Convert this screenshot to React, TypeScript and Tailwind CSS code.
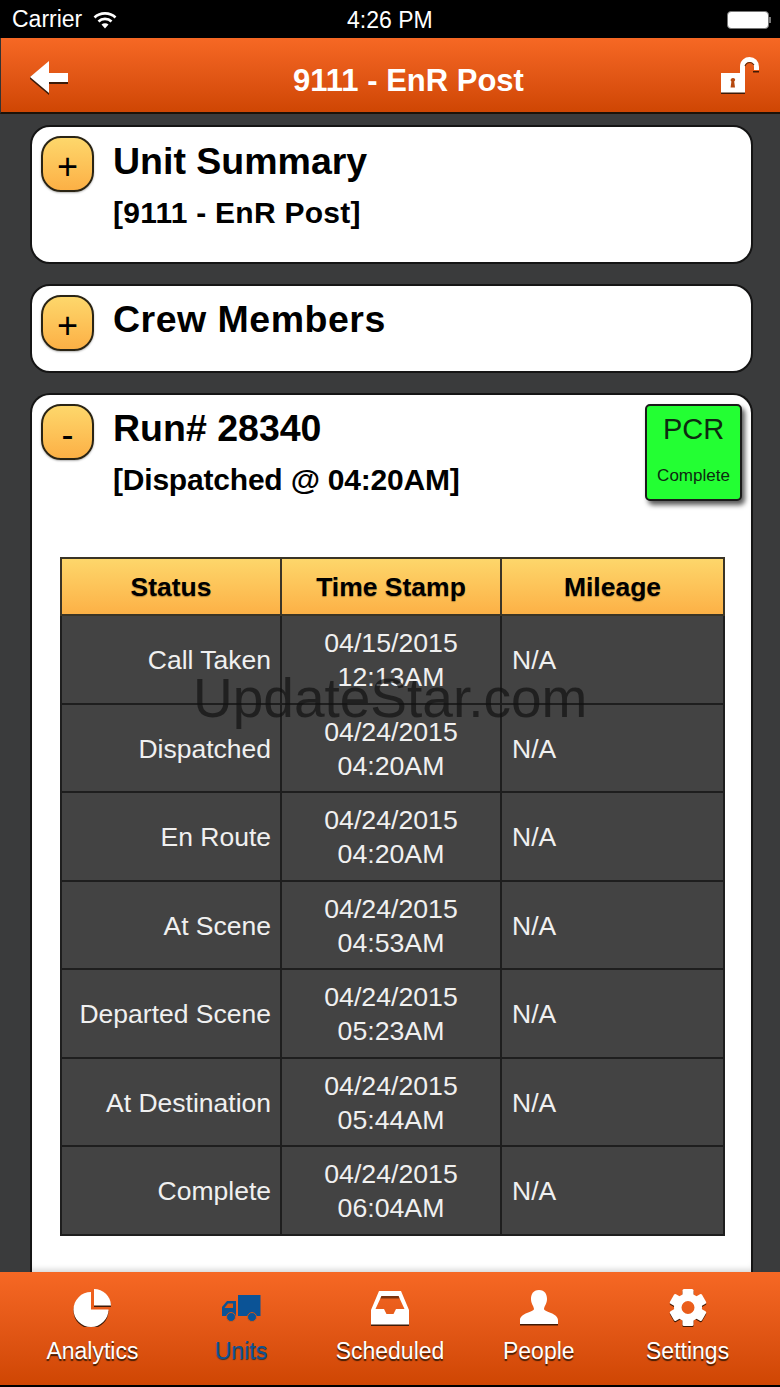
import React from "react";

const rows = [
  ["Call Taken", "04/15/2015", "12:13AM"],
  ["Dispatched", "04/24/2015", "04:20AM"],
  ["En Route", "04/24/2015", "04:20AM"],
  ["At Scene", "04/24/2015", "04:53AM"],
  ["Departed Scene", "04/24/2015", "05:23AM"],
  ["At Destination", "04/24/2015", "05:44AM"],
  ["Complete", "04/24/2015", "06:04AM"],
];

function Toggle({ sign }: { sign: string }) {
  return (
    <div className="flex h-[56px] w-[53px] shrink-0 items-center justify-center rounded-[20px] border-2 border-[#2a2414] bg-gradient-to-b from-[#fdd76b] to-[#fcb045] pt-[6px] text-[36px] leading-none text-black shadow-[0_1px_2px_rgba(0,0,0,0.3)]">
      {sign}
    </div>
  );
}

function Card({ children, className }: { children: React.ReactNode; className: string }) {
  return (
    <section className={`ml-[30px] mr-[27px] rounded-[20px] border-2 border-[#151515] bg-white ${className}`}>{children}</section>
  );
}

function Wifi() {
  return (
    <svg width="24" height="18" viewBox="0 0 24 18" fill="none" stroke="white" strokeWidth="2.6">
      <path d="M1.5 6.5C7 1 17 1 22.5 6.5" />
      <path d="M5.5 10.5C9 7 15 7 18.5 10.5" />
      <path d="M12 17.5L8.5 13.5C10.5 11.8 13.5 11.8 15.5 13.5Z" fill="white" stroke="none" />
    </svg>
  );
}

function Back() {
  return (
    <svg width="39" height="36" viewBox="0 0 39 36">
      <path d="M0 17L19 3V35L0 19ZM19 22H38V24H19Z" fill="#3a1a08" />
      <path d="M0 17L19 1V13H38V22H19V33Z" fill="white" />
    </svg>
  );
}

function Lock() {
  return (
    <svg width="38" height="37" viewBox="0 0 38 37">
      <rect x="0" y="16" width="24" height="21" fill="#3f1a06" />
      <rect x="0" y="16" width="24" height="19.5" fill="white" />
      <path d="M10 22a2.5 2.5 0 0 1 4 0c.4 1-.2 2-.8 2.6l.8 6h-4.400l.8-6c-.6-.6-1.200-1.600-.4-2.600z" fill="#b5490f" />
      <path d="M21.500 16V9.500C21.500 5 25 2.500 28.500 2.500C32.500 2.500 35.500 5.500 35.500 10V13" fill="none" stroke="white" strokeWidth="5" />
      <path d="M24 9C25 6.500 27 5.500 29 5.500C30.500 5.500 32 6.500 33 8" fill="none" stroke="#5a2a0c" strokeWidth="1.200" />
      <rect x="32" y="14" width="6" height="1.500" fill="#3f1a06" />
    </svg>
  );
}

function Pie() {
  return (
    <svg width="38" height="38" viewBox="0 0 38 38">
      <path d="M18 4.500A17.500 17.500 0 1 0 35.500 22H18Z" fill="#3f1a06" />
      <path d="M18 3A17.500 17.500 0 1 0 35.500 20.500H18Z" fill="white" />
      <path d="M21 1.500A17 17 0 0 1 38 18H21Z" fill="#3f1a06" />
      <path d="M21 0A17 17 0 0 1 38 16.500H21Z" fill="white" />
    </svg>
  );
}

function Truck() {
  return (
    <svg width="39" height="27" viewBox="0 0 39 27" fill="#0b5396">
      <rect x="16" y="0" width="22.500" height="21" />
      <path d="M0 12L5 6H14V21H0Z" />
      <path d="M6 8.500H11V13H2.500Z" fill="#d9560f" />
      <circle cx="9" cy="22" r="4.500" stroke="#d9560f" strokeWidth="1" />
      <circle cx="30" cy="22" r="4.500" stroke="#d9560f" strokeWidth="1" />
    </svg>
  );
}

function Inbox() {
  return (
    <svg width="38" height="35" viewBox="0 0 38 35">
      <rect x="0" y="32" width="38" height="3" fill="#3f1a06" />
      <path d="M8 0H30L38 19V33.500H0V19ZM10.500 5L4.500 18H13L15.500 23H22.500L25 18H33.500L27.500 5Z" fill="white" fillRule="evenodd" />
      <path d="M10.500 5H27.500L28.500 7.500H9.400Z" fill="#7a3410" />
    </svg>
  );
}

function Person() {
  return (
    <svg width="38" height="36" viewBox="0 0 38 36">
      <path d="M19 0C25 0 27 4.500 27 9C27 13.500 24.500 15.500 24 19C24 22 38 23 38 30V34H0V30C0 23 14 22 14 19C13.500 15.500 11 13.500 11 9C11 4.500 13 0 19 0Z" fill="white" />
      <rect x="0" y="34" width="38" height="1.500" fill="#3f1a06" />
    </svg>
  );
}

function Gear() {
  const teeth = [0, 60, 120, 180, 240, 300];
  return (
    <svg width="38" height="38" viewBox="0 0 38 38">
      <g fill="#3f1a06" transform="translate(0 1.200)">
        {teeth.map((a) => (
          <rect key={a} x="13.500" y="0" width="11" height="10" rx="1.500" transform={`rotate(${a} 19 18.500)`} />
        ))}
      </g>
      <g fill="white">
        {teeth.map((a) => (
          <rect key={a} x="13.500" y="0" width="11" height="10" rx="1.500" transform={`rotate(${a} 19 18.500)`} />
        ))}
      </g>
      <path d="M19 4.500A14 14 0 1 0 19 32.500A14 14 0 1 0 19 4.500ZM19 12A6.500 6.500 0 1 1 19 25A6.500 6.500 0 1 1 19 12Z" fill="white" fillRule="evenodd" />
    </svg>
  );
}

const tabs: [string, React.ReactNode][] = [
  ["Analytics", <Pie />],
  ["Units", <Truck />],
  ["Scheduled", <Inbox />],
  ["People", <Person />],
  ["Settings", <Gear />],
];

export default function App() {
  return (
    <div className="flex h-[1387px] w-[780px] flex-col overflow-hidden bg-black font-['Liberation_Sans',Arial,sans-serif]">
      <header className="relative flex h-[38px] shrink-0 items-center justify-between bg-black pl-[12px] pr-[9px] pt-[1px] text-white">
        <div className="flex items-center gap-[11px] text-[23px] leading-none">
          <span>Carrier</span>
          <Wifi />
        </div>
        <span className="absolute left-[347px] top-[9px] text-[23px] leading-none">4:26 PM</span>
        <div className="flex items-center">
          <div className="h-[18px] w-[42px] rounded-[4px] border border-[#777] bg-white" />
          <div className="h-[6px] w-[2px] bg-[#777]" />
        </div>
      </header>

      <div className="relative flex h-[76px] shrink-0 items-start justify-between border-b-2 border-l border-[#1c1208] border-l-[#333] bg-gradient-to-b from-[#f66824] to-[#cf4603] pl-[29px] pr-[21px]">
        <div className="mt-[22px]"><Back /></div>
        <h1 className="absolute left-0 right-0 top-[24px] pl-[36px] text-center text-[31px] font-bold leading-[38px] text-white">9111 - EnR Post</h1>
        <div className="mt-[19px]"><Lock /></div>
      </div>

      <main className="flex min-h-0 flex-1 flex-col gap-[20px] overflow-hidden bg-[#3a3b3c] pt-[11px]">
        <Card className="h-[139px] shrink-0">
          <div className="flex px-[9px] pt-[9px]">
            <Toggle sign="+" />
            <div className="pl-[19px] pt-[4px]">
              <h2 className="text-[37.500px] font-bold leading-[42px] text-black">Unit Summary</h2>
              <p className="mt-[13px] text-[30px] font-bold leading-[36px] tracking-[0.25px] text-black">[9111 - EnR Post]</p>
            </div>
          </div>
        </Card>

        <Card className="h-[89px] shrink-0">
          <div className="flex px-[9px] pt-[9px]">
            <Toggle sign="+" />
            <h2 className="pl-[19px] pt-[3px] text-[37.500px] font-bold leading-[42px] tracking-[0.5px] text-black">Crew Members</h2>
          </div>
        </Card>

        <Card className="relative min-h-0 flex-1 rounded-b-none border-b-0 shadow-[inset_0_-6px_6px_-4px_rgba(0,0,0,0.18)]">
          <div className="flex px-[9px] pt-[9px]">
            <Toggle sign="-" />
            <div className="flex-1 pl-[19px] pt-[3px]">
              <h2 className="text-[37.500px] font-bold leading-[42px] text-black">Run# 28340</h2>
              <p className="mt-[13px] text-[30px] font-bold leading-[36px] tracking-[-0.2px] text-black">[Dispatched @ 04:20AM]</p>
            </div>
            <div className="flex h-[97px] w-[97px] flex-col items-center rounded-[5px] border-2 border-[#1a1a1a] bg-[#23ff33] pt-[5px] text-[#0d2a10] shadow-[3px_4px_5px_rgba(0,0,0,0.65)]">
              <span className="text-[29px] leading-[36px]">PCR</span>
              <span className="mt-[18px] text-[17px] leading-[22px]">Complete</span>
            </div>
          </div>

          <div className="relative ml-[28px] mt-[56px]">
            <table className="w-[663px] table-fixed border-collapse border-2 border-[#2a2a2a] bg-[#434343] text-[26.500px] leading-[34px] text-[#f0f0f0]">
              <colgroup>
                <col className="w-[220px]" />
                <col className="w-[220px]" />
                <col className="w-[223px]" />
              </colgroup>
              <thead>
                <tr className="h-[57px] bg-gradient-to-b from-[#fdd76b] to-[#fcb045] text-black">
                  {["Status", "Time Stamp", "Mileage"].map((h) => (
                    <th key={h} className="border-2 border-[#3a3426] text-center text-[26.500px] font-bold [text-shadow:0_1px_1px_rgba(0,0,0,0.3)]">{h}</th>
                  ))}
                </tr>
              </thead>
              <tbody>
                {rows.map(([s, d, t]) => (
                  <tr key={s} className="h-[88.500px]">
                    <td className="border-2 border-[#1e1e1e] pr-[9px] pt-[2px] text-right">{s}</td>
                    <td className="border-2 border-[#1e1e1e] pt-[2px] text-center text-[26.700px]">{d}<br />{t}</td>
                    <td className="border-2 border-[#1e1e1e] pl-[10px] pt-[2px] text-left">N/A</td>
                  </tr>
                ))}
              </tbody>
            </table>
            <span className="pointer-events-none absolute left-[133px] top-[106px] text-[55px] leading-[70px] text-[#111]/70">UpdateStar.com</span>
          </div>
        </Card>
      </main>

      <nav className="grid h-[113px] shrink-0 grid-cols-5 bg-gradient-to-b from-[#f66824] to-[#cf4603] px-[18px] pt-[17px]">
        {tabs.map(([label, icon]) => {
          const active = label === "Units";
          return (
            <div key={label} className="flex flex-col items-center">
              <div className="flex h-[38px] items-center">{icon}</div>
              <span className={`mt-[6px] text-[23px] leading-[36px] ${active ? "text-[#0b5396] [text-shadow:0_1px_1px_#333]" : "text-white [text-shadow:0_1.500px_1px_#3f1b05]"}`}>{label}</span>
            </div>
          );
        })}
      </nav>
      <div className="h-[2px] shrink-0 bg-black" />
    </div>
  );
}
